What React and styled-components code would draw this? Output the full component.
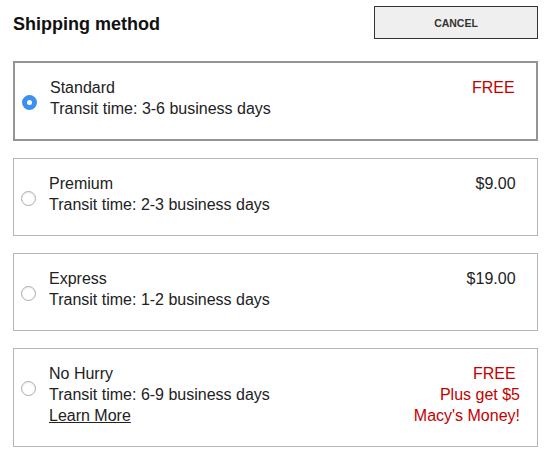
import React from "react"
import styled, { createGlobalStyle } from "styled-components"

const GlobalStyle = createGlobalStyle`
  * { box-sizing: border-box; }
  body {
    margin: 0;
    background: #ffffff;
    font-family: "Liberation Sans", Arial, sans-serif;
    color: #222222;
  }
`;

const Page = styled.div`
  padding: 0 14px 0 13px;
`;

const Header = styled.div`
  display: flex;
  justify-content: space-between;
  align-items: flex-start;
`;

const Title = styled.h1`
  margin: 13px 0 0;
  font-size: 18px;
  line-height: 22px;
  font-weight: 700;
  color: #111111;
`;

const CancelButton = styled.button`
  margin-top: 6px;
  width: 164px;
  height: 33px;
  background: #efefef;
  border: 1px solid #333333;
  font-family: "Liberation Sans", Arial, sans-serif;
  font-weight: 700;
  font-size: 10.5px;
  color: #333333;
  padding: 0;
`;

const List = styled.div`
  margin-top: 22px;
  display: flex;
  flex-direction: column;
  gap: 17px;
`;

const Card = styled.label`
  display: flex;
  align-items: flex-start;
  padding: 14px 17px 20px 7px;
  border: ${p => (p.$selected ? "2px solid #949494" : "1px solid #b5b5b5")};
  font-size: 16px;
  line-height: 21px;
`;

const Radio = styled.span`
  flex: none;
  width: 15px;
  height: 15px;
  margin-top: 18px;
  margin-right: 13px;
  border-radius: 50%;
  background: #ffffff;
  border: ${p => (p.$checked ? "5px solid #3d8ff2" : "1px solid #ababab")};
  box-shadow: ${p => (p.$checked ? "none" : "inset 0 1px 2px rgba(0,0,0,0.08)")};
`;

const Info = styled.div`
  flex: 1;
  display: flex;
  flex-direction: column;
`;

const LearnMore = styled.a`
  color: #222222;
  text-decoration: underline;
  align-self: flex-start;
`;

const Price = styled.div`
  text-align: right;
  white-space: nowrap;
  color: ${p => (p.$promo ? "#c40000" : "#222222")};
`;

const options = [
  { name: "Standard", days: "3-6", price: ["FREE"], promo: true, selected: true },
  { name: "Premium", days: "2-3", price: ["$9.00"] },
  { name: "Express", days: "1-2", price: ["$19.00"] },
  { name: "No Hurry", days: "6-9", price: ["FREE", "Plus get $5", "Macy's Money!"], promo: true, learn: true },
];

export default function App() {
  return (
    <>
      <GlobalStyle />
      <Page>
        <Header>
          <Title>Shipping method</Title>
          <CancelButton>CANCEL</CancelButton>
        </Header>
        <List>
          {options.map(o => (
            <Card key={o.name} $selected={o.selected}>
              <Radio $checked={o.selected} />
              <Info>
                <span>{o.name}</span>
                <span>Transit time: {o.days} business days</span>
                {o.learn && <LearnMore href="#">Learn More</LearnMore>}
              </Info>
              <Price $promo={o.promo}>
                {o.price.map((line, i) => (
                  <div key={line}>{i === 0 ? line + "\u00a0" : line}</div>
                ))}
              </Price>
            </Card>
          ))}
        </List>
      </Page>
    </>
  );
}
